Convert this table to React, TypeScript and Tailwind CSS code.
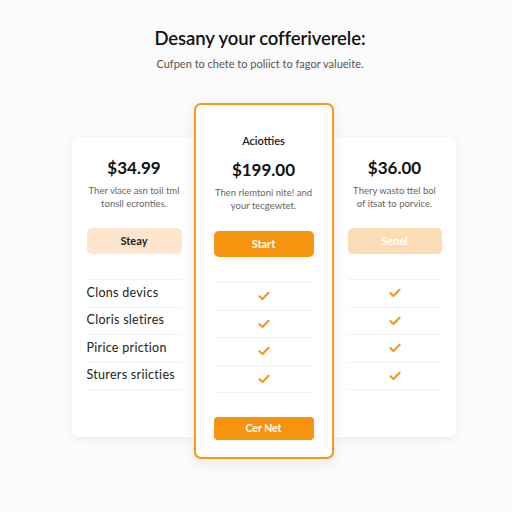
import React from "react";

const features = ["Clons devics", "Cloris sletires", "Pirice priction", "Sturers sriicties"];

function Check() {
  return (
    <svg width="12" height="10" viewBox="0 0 12 10" fill="none">
      <path d="M1.5 5.2 L4.5 8 L10.5 1.8" stroke="#f39a1e" strokeWidth="2.2" strokeLinecap="round" strokeLinejoin="round" />
    </svg>
  );
}

function Rows({ check }: { check: boolean }) {
  return (
    <div className="mt-[25px] border-t border-[#f2f2f2]">
      {features.map((f) => (
        <div key={f} className="h-[27.5px] flex items-center border-b border-[#f2f2f2]">
          {check ? (
            <div className="w-full flex justify-center">
              <Check />
            </div>
          ) : (
            <span className="text-[12.5px] tracking-[0.3px] text-[#222] whitespace-nowrap">{f}</span>
          )}
        </div>
      ))}
    </div>
  );
}

export default function App() {
  return (
    <div
      className="w-[512px] h-[512px] bg-[#fbfbfb] flex flex-col items-center pl-[8px]"
      style={{ fontFamily: "Lato, 'Noto Sans', sans-serif" }}
    >
      <h1 className="mt-[27px] text-[18.5px] leading-[22px] font-semibold text-[#111] tracking-[-0.1px]">
        Desany your cofferiverele:
      </h1>
      <p className="mt-[8px] text-[11px] leading-[13px] text-[#555]">
        Cufpen to chete to poliict to fagor valueite.
      </p>

      <div className="mt-[33px] ml-[7px] flex items-start">
        {/* Left card */}
        <div className="mt-[34px] w-[122px] h-[300px] bg-white rounded-l-[6px] shadow-[0_2px_8px_rgba(0,0,0,0.06)] pl-[15px] pr-[12px] pt-[20px] flex flex-col">
          <div className="text-center text-[17px] leading-[22px] font-bold text-[#111]">$34.99</div>
          <div className="mt-[5px] text-center text-[9.5px] leading-[13px] text-[#666] whitespace-nowrap">
            Ther vlace asn toil tml
            <br />
            tonsll ecronties.
          </div>
          <div className="mt-[18px] h-[26px] rounded-[5px] bg-[#fde6cd] flex items-center justify-center text-[11px] font-bold text-[#222]">
            Steay
          </div>
          <Rows check={false} />
        </div>

        {/* Middle card */}
        <div className="relative z-10 w-[140px] h-[356px] bg-white rounded-[7px] border-[2.5px] border-[#f59a16] shadow-[0_4px_14px_rgba(0,0,0,0.08)] px-[18px] pt-[29px] flex flex-col">
          <div className="text-center text-[11px] leading-[14px] font-semibold text-[#222]">Aciotties</div>
          <div className="mt-[11px] text-center text-[17px] leading-[22px] font-bold text-[#111]">$199.00</div>
          <div className="mt-[5px] text-center text-[9.5px] leading-[13px] text-[#666] whitespace-nowrap">
            Then rlemtoni nite! and
            <br />
            your tecgewtet.
          </div>
          <div className="mt-[19px] h-[26px] rounded-[5px] bg-[#f7940f] flex items-center justify-center text-[11px] font-bold text-white">
            Start
          </div>
          <Rows check={true} />
          <div className="mt-[24px] h-[23px] rounded-[4px] bg-[#f7940f] flex items-center justify-center text-[10.5px] font-bold text-white">
            Cer Net
          </div>
        </div>

        {/* Right card */}
        <div className="mt-[34px] w-[122px] h-[300px] bg-white rounded-r-[6px] shadow-[0_2px_8px_rgba(0,0,0,0.06)] pl-[14px] pr-[14px] pt-[20px] flex flex-col">
          <div className="text-center text-[17px] leading-[22px] font-bold text-[#111]">$36.00</div>
          <div className="mt-[5px] text-center text-[9.5px] leading-[13px] text-[#666] whitespace-nowrap">
            Thery wasto ttel bol
            <br />
            of itsat to porvice.
          </div>
          <div className="mt-[18px] h-[26px] rounded-[5px] bg-[#fcdcb6] flex items-center justify-center text-[11px] font-bold text-white">
            Senel
          </div>
          <Rows check={true} />
        </div>
      </div>
    </div>
  );
}
